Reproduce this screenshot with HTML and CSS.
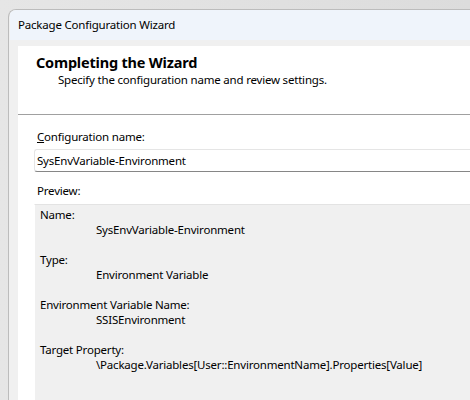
FILE: index.html
```html
<!DOCTYPE html>
<html lang="en">
<head>
  <meta charset="UTF-8">
  <title>Package Configuration Wizard</title>
  <link rel="stylesheet" href="styles.css">
</head>
<body>
  <div class="wizard">
    <div class="wizard-title">Package Configuration Wizard</div>
    <div class="wizard-body">
      <div class="wizard-page">
        <div class="wizard-header">
          <div class="header-title">Completing the Wizard</div>
          <div class="header-sub">Specify the configuration name and review settings.</div>
        </div>
        <div class="wizard-content">
          <label class="field-label" for="cfg-name"><u>C</u>onfiguration name:</label>
          <input class="field-input" id="cfg-name" type="text" value="SysEnvVariable-Environment">
          <div class="field-label preview-label">Preview:</div>
          <div class="preview">
            <div class="preview-group">
              <div class="preview-key">Name:</div>
              <div class="preview-val">SysEnvVariable-Environment</div>
            </div>
            <div class="preview-group">
              <div class="preview-key">Type:</div>
              <div class="preview-val">Environment Variable</div>
            </div>
            <div class="preview-group">
              <div class="preview-key">Environment Variable Name:</div>
              <div class="preview-val">SSISEnvironment</div>
            </div>
            <div class="preview-group">
              <div class="preview-key">Target Property:</div>
              <div class="preview-val">\Package.Variables[User::EnvironmentName].Properties[Value]</div>
            </div>
          </div>
        </div>
      </div>
    </div>
  </div>
</body>
</html>
```

FILE: styles.css
```css
html, body {
  margin: 0;
  height: 100%;
  overflow: hidden;
}
body {
  background: linear-gradient(to right, #e6e6e6, #dcdcdc);
  font-family: 'Noto Sans', 'Liberation Sans', sans-serif;
  font-size: 11.5px;
  letter-spacing: -0.2px;
  color: #000;
  padding: 9px 0 0 8px;
  box-sizing: border-box;
}
.wizard {
  height: 100%;
  border-left: 1px solid #bcbcbc;
  border-top: 1px solid #bcbcbc;
  border-top-left-radius: 8px;
  background: #f0f0f0;
  overflow: hidden;
  padding-left: 1px;
}
.wizard-title {
  height: 30px;
  line-height: 30px;
  padding-left: 8px;
  background: #eff4fb;
}
.wizard-body {
  padding: 6px 0 0 8px;
  height: 100%;
  box-sizing: border-box;
}
.wizard-page {
  background: #fff;
  height: 100%;
}
.wizard-header {
  height: 69px;
  box-sizing: border-box;
  border-bottom: 1px solid #a0a0a0;
  padding: 6px 0 0 18px;
}
.header-title {
  font-size: 14.5px;
  font-weight: bold;
  letter-spacing: -0.2px;
  line-height: 20px;
}
.header-sub {
  padding-left: 22px;
  line-height: 15px;
}
.wizard-content {
  padding: 14px 0 0 16px;
}
.field-label {
  display: block;
  line-height: 15px;
  padding-left: 3px;
}
.field-input {
  display: block;
  box-sizing: border-box;
  width: 100%;
  height: 23px;
  margin: 5px 0 0 0;
  padding: 0 2px;
  border: 1px solid #e5e5e5;
  border-right: none;
  border-bottom: 1px solid #868686;
  border-radius: 3px 0 0 3px;
  font-family: inherit;
  font-size: 11.5px;
  letter-spacing: -0.2px;
  color: #000;
  outline: none;
}
.preview-label {
  margin-top: 11px;
}
.preview {
  margin-top: 6px;
  background: #f0f0f0;
  border-top: 1px solid #e3e3e3;
  border-left: 1px solid #fff;
  padding: 2px 0 0 5px;
  height: 300px;
}
.preview-group {
  line-height: 15px;
  padding-bottom: 15px;
}
.preview-val {
  padding-left: 56px;
}
```
